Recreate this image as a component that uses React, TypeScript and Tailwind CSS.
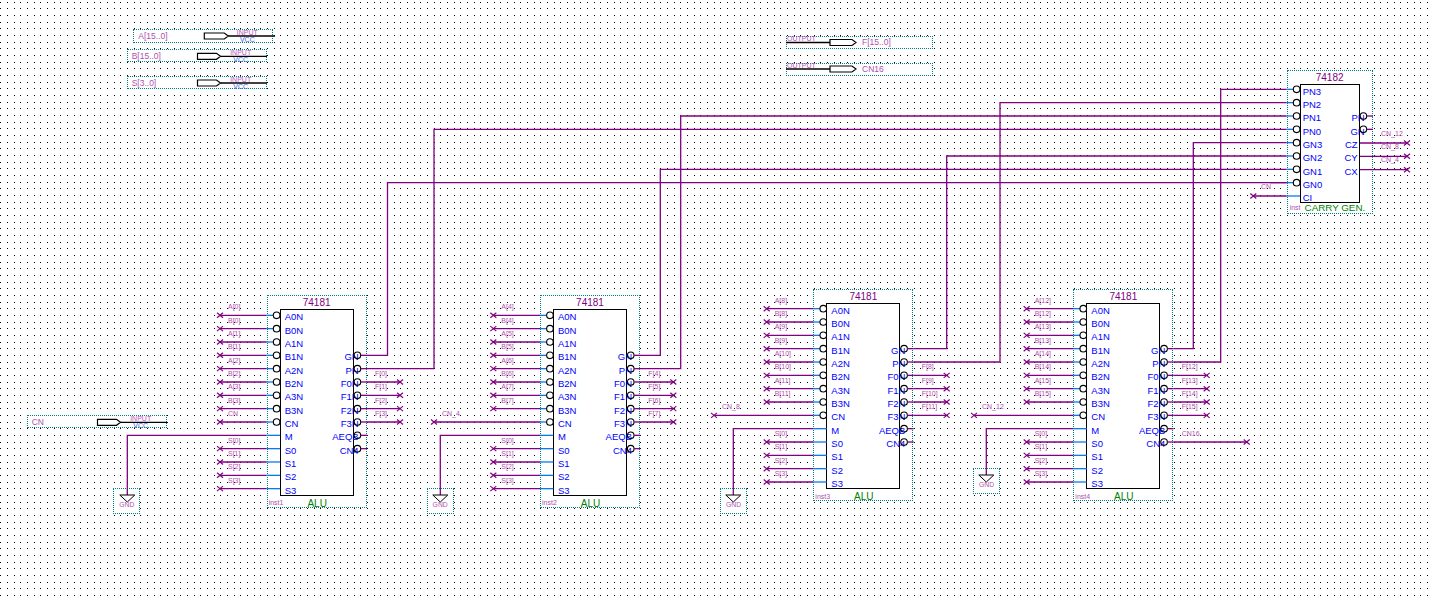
const ROW = 40 / 3;
const WIRE = '#800080';
const STUB = '#0a78f0';

// dot grid of the schematic editor
let dots = '';
for (let i = 0; i < 216; i++) {
  for (let j = 0; j < 90; j++) {
    const x = Math.floor(0.67 + i * (20 / 3));
    const y = Math.floor(2.3 + j * (20 / 3));
    dots += `M${x} ${y}h1v1h-1z`;
  }
}

interface AluChip {
  left: number;
  top: number;
  pos: string;
  inst: string;
  first: number;
  sel: number;
  gnd: [number, number];
  cn: { label: string; x: number } | null;
  g: { x: number; y: number };
  p: { x: number; y: number };
}

const gen = { left: 1300, top: 83.33, y0: 89.33 };
const genRow = (i: number) => gen.y0 + i * ROW;

const chips: AluChip[] = [
  { left: 280, top: 309.33, pos: 'left-[266.67px] top-[295.33px]', inst: 'inst1', first: 0, sel: 0, gnd: [127.3, 495], cn: null, g: { x: 387.5, y: genRow(7) }, p: { x: 434, y: genRow(3) } },
  { left: 553.33, top: 309.33, pos: 'left-[540px] top-[295.33px]', inst: 'inst2', first: 4, sel: 0, gnd: [440.3, 495], cn: { label: 'CN_4', x: 434 }, g: { x: 660.3, y: genRow(6) }, p: { x: 680.7, y: genRow(2) } },
  { left: 826.67, top: 302.67, pos: 'left-[813.33px] top-[288.67px]', inst: 'inst3', first: 8, sel: 0, gnd: [733.3, 495], cn: { label: 'CN_8', x: 714 }, g: { x: 946.7, y: genRow(5) }, p: { x: 1000, y: genRow(1) } },
  { left: 1086.67, top: 302.67, pos: 'left-[1073.33px] top-[288.67px]', inst: 'inst4', first: 12, sel: 0, gnd: [986.3, 475], cn: { label: 'CN_12', x: 974 }, g: { x: 1193.3, y: genRow(4) }, p: { x: 1220.7, y: genRow(0) } },
];

const aluLeft = ['A0N', 'B0N', 'A1N', 'B1N', 'A2N', 'B2N', 'A3N', 'B3N', 'CN', 'M', 'S0', 'S1', 'S2', 'S3'];
const aluRight = ['GN', 'PN', 'F0N', 'F1N', 'F2N', 'F3N', 'AEQB', 'CN4'];
const genLeft = ['PN3', 'PN2', 'PN1', 'PN0', 'GN3', 'GN2', 'GN1', 'GN0', 'CI'];

function Cross({ x, y }: { x: number; y: number }) {
  return <path d={`M${x - 3} ${y - 2.5}L${x + 3} ${y + 2.5}M${x - 3} ${y + 2.5}L${x + 3} ${y - 2.5}`} stroke={WIRE} strokeWidth="1.2" fill="none" />;
}

function Line({ d, color = WIRE }: { d: string; color?: string }) {
  return <path d={d} stroke={color} strokeWidth="1.3" fill="none" />;
}

function Bubble({ x, y }: { x: number; y: number }) {
  return <circle cx={x} cy={y} r="3.3" stroke="#000" strokeWidth="1.1" fill="none" />;
}

function Label({ x, y, text }: { x: number; y: number; text: string }) {
  return (
    <text x={x} y={y} dominantBaseline="middle" className="fill-[#b050b0] text-[7px]">
      {text}
    </text>
  );
}

function AluWires({ chip }: { chip: AluChip }) {
  const { left, top, first } = chip;
  const y0 = top + 6;
  const row = (i: number) => y0 + i * ROW;
  const edge = left - 13.33;
  const right = left + 87;
  const inLabels: string[] = [];
  for (let b = first; b < first + 4; b++) inLabels.push(`A[${b}]`, `B[${b}]`);

  return (
    <g>
      {/* data inputs and carry in */}
      {aluLeft.slice(0, 9).map((_, i) => {
        const from = i === 8 && chip.cn ? chip.cn.x : left - 60;
        return (
          <g key={i}>
            <Cross x={from} y={row(i)} />
            <Line d={`M${from} ${row(i)}H${edge}`} />
            <Line d={`M${edge} ${row(i)}H${left - 6.6}`} color={STUB} />
            <Bubble x={left - 3.4} y={row(i)} />
          </g>
        );
      })}
      {inLabels.map((t, i) => (
        <Label key={t} x={left - 52} y={row(i) - 8} text={t} />
      ))}
      {chip.cn ? <Label x={chip.cn.x + 8} y={row(8) - 8} text={chip.cn.label} /> : <Label x={left - 52} y={row(8) - 8} text="CN" />}

      {/* mode pin goes to ground */}
      <Line d={`M${chip.gnd[0]} ${chip.gnd[1]}V${row(9)}H${edge}`} />
      <Line d={`M${edge} ${row(9)}H${left}`} color={STUB} />
      <path d={`M${chip.gnd[0] - 7.5} ${chip.gnd[1]}h15l-7.5 7z`} stroke="#000" strokeWidth="1" fill="#fff" />

      {[0, 1, 2, 3].map((s) => (
        <g key={s}>
          <Cross x={left - 60} y={row(10 + s)} />
          <Line d={`M${left - 60} ${row(10 + s)}H${edge}`} />
          <Line d={`M${edge} ${row(10 + s)}H${left}`} color={STUB} />
          <Label x={left - 52} y={row(10 + s) - 8} text={`S[${s}]`} />
        </g>
      ))}

      {/* outputs */}
      {aluRight.map((_, i) => (
        <g key={i}>
          <Bubble x={left + 77.4} y={row(3 + i)} />
          <Line d={`M${left + 80.8} ${row(3 + i)}H${right}`} />
        </g>
      ))}
      <Line d={`M${right} ${row(3)}H${chip.g.x}V${chip.g.y}H${gen.left - 13.33}`} />
      <Line d={`M${right} ${row(4)}H${chip.p.x}V${chip.p.y}H${gen.left - 13.33}`} />
      {[0, 1, 2, 3].map((f) => (
        <g key={f}>
          <Line d={`M${right} ${row(5 + f)}H${left + 120}`} />
          <Cross x={left + 120} y={row(5 + f)} />
          <Label x={left + 95} y={row(5 + f) - 8} text={`F[${first + f}]`} />
        </g>
      ))}
      {first === 12 && (
        <g>
          <Line d={`M${right} ${row(10)}H${left + 160}`} />
          <Cross x={left + 160} y={row(10)} />
          <Label x={left + 95} y={row(10) - 8} text="CN16" />
        </g>
      )}
    </g>
  );
}

function GenWires() {
  const edge = gen.left - 13.33;
  return (
    <g>
      {genLeft.slice(0, 8).map((_, i) => (
        <g key={i}>
          <Line d={`M${edge} ${genRow(i)}H${gen.left - 6.6}`} color={STUB} />
          <Bubble x={gen.left - 3.4} y={genRow(i)} />
        </g>
      ))}
      <Line d={`M1253.3 ${genRow(8)}H${edge}`} />
      <Line d={`M${edge} ${genRow(8)}H${gen.left}`} color={STUB} />
      <Cross x={1253.3} y={genRow(8)} />
      <Label x={1261} y={genRow(8) - 9} text="CN" />
      <Line d={`M${edge} ${genRow(7)}H1270`} />

      <Bubble x={1363.4} y={116} />
      <Bubble x={1363.4} y={129.33} />
      <Line d="M1366.8 116H1373" />
      <Line d="M1366.8 129.33H1373" />
      {['CN_12', 'CN_8', 'CN_4'].map((t, i) => (
        <g key={t}>
          <Line d={`M1360 ${143 + i * ROW}H1407`} />
          <Cross x={1407} y={143 + i * ROW} />
          <Label x={1381} y={134 + i * 13} text={t} />
        </g>
      ))}
    </g>
  );
}

function PinShape({ x, y, w }: { x: number; y: number; w: number }) {
  return <path d={`M${x} ${y - 3}H${x + w - 4}L${x + w} ${y}L${x + w - 4} ${y + 3}H${x}z`} stroke="#000" strokeWidth="1.2" fill="#fff" />;
}

function Alu({ chip }: { chip: AluChip }) {
  return (
    <div className={`absolute ${chip.pos} w-[100px] h-[212.67px] bg-white border border-dotted border-[#008080]`}>
      <div className="h-[13px] leading-[13px] text-center text-[10px] text-[#800080]">74181</div>
      <div className="mx-auto w-[74px] h-[186.67px] bg-white border border-black flex justify-between text-[9.5px] text-[#0000ff]">
        <div className="flex flex-col pl-[4px]">
          {aluLeft.map((p) => (
            <div key={p} className="h-[13.33px] leading-[13.33px]">{p}</div>
          ))}
        </div>
        <div className="flex flex-col items-end pt-[40px] -mr-[6px]">
          {aluRight.map((p) => (
            <div key={p} className="h-[13.33px] leading-[13.33px]">{p}</div>
          ))}
        </div>
      </div>
      <div className="grid grid-cols-[1fr_auto_1fr] items-center h-[11px] pl-[1px]">
        <span className="text-[7px] text-[#b050b0]">{chip.inst}</span>
        <span className="text-[10px] text-[#008000]">ALU</span>
      </div>
    </div>
  );
}

function CarryGen() {
  const right = [
    { t: 'PN', c: '-mr-[6px]' },
    { t: 'GN', c: '-mr-[6px]' },
    { t: 'CZ', c: 'mr-[1px]' },
    { t: 'CY', c: 'mr-[1px]' },
    { t: 'CX', c: 'mr-[1px]' },
  ];
  return (
    <div className="absolute left-[1286.67px] top-[69.67px] w-[86px] h-[144.67px] bg-white border border-dotted border-[#008080]">
      <div className="h-[13px] leading-[13px] text-center text-[10px] text-[#800080]">74182</div>
      <div className="mx-auto w-[60px] h-[119px] bg-white border border-black flex justify-between text-[9.5px] text-[#0000ff]">
        <div className="flex flex-col pl-[2px]">
          {genLeft.map((p) => (
            <div key={p} className="h-[13.33px] leading-[13.33px]">{p}</div>
          ))}
        </div>
        <div className="flex flex-col items-end pt-[26.67px]">
          {right.map((p) => (
            <div key={p.t} className={`h-[13.33px] leading-[13.33px] ${p.c}`}>{p.t}</div>
          ))}
        </div>
      </div>
      <div className="flex items-center gap-[4px] h-[11px] pl-[2px]">
        <span className="text-[7px] text-[#b050b0]">inst</span>
        <span className="text-[9.8px] whitespace-nowrap text-[#008000]">CARRY GEN.</span>
      </div>
    </div>
  );
}

function InputPin({ pos, name }: { pos: string; name: string }) {
  return (
    <div className={`absolute ${pos} bg-white border border-dotted border-[#008080] flex items-center justify-between pl-[4px]`}>
      <span className="text-[8.5px] leading-[10px] text-[#b050b0]">{name}</span>
      <div className="w-[50px] text-center text-[7px] leading-[7px]">
        <div className="text-[#c050c0]">INPUT</div>
        <div className="text-[#4060e0]">VCC</div>
      </div>
    </div>
  );
}

function OutputPin({ pos, name }: { pos: string; name: string }) {
  return (
    <div className={`absolute ${pos} bg-white border border-dotted border-[#008080] flex items-start`}>
      <span className="w-[75px] -mt-[2px] text-[7px] leading-[8px] text-[#c050c0]">OUTPUT</span>
      <span className="text-[8.5px] leading-[10px] text-[#b050b0]">{name}</span>
    </div>
  );
}

function Gnd({ pos }: { pos: string }) {
  return (
    <div className={`absolute ${pos} w-[27px] h-[26px] bg-white border border-dotted border-[#008080] flex items-end justify-center pb-[4px]`}>
      <span className="text-[6.8px] leading-[8px] text-[#b050b0]">GND</span>
    </div>
  );
}

export default function App() {
  return (
    <div className="relative w-[1434px] h-[599px] bg-white overflow-hidden [font-family:'Liberation_Sans',Arial,sans-serif]">
      <svg className="absolute inset-0" width="1434" height="599">
        <path d={dots} fill="#000" shapeRendering="crispEdges" />
      </svg>

      <InputPin pos="left-[133.33px] top-[29.33px] w-[140px] h-[13.33px]" name="A[15..0]" />
      <InputPin pos="left-[126.67px] top-[49px] w-[140px] h-[13.33px]" name="B[15..0]" />
      <InputPin pos="left-[126.67px] top-[76px] w-[140px] h-[13.33px]" name="S[3..0]" />
      <InputPin pos="left-[26.67px] top-[415px] w-[140px] h-[13.33px]" name="CN" />
      <OutputPin pos="left-[786px] top-[36px] w-[147.33px] h-[13.33px]" name="F[15..0]" />
      <OutputPin pos="left-[786px] top-[62.67px] w-[147.33px] h-[13.33px]" name="CN16" />

      <Gnd pos="left-[113.33px] top-[488px]" />
      <Gnd pos="left-[426.67px] top-[488px]" />
      <Gnd pos="left-[720px] top-[488px]" />
      <Gnd pos="left-[973px] top-[468px]" />

      {chips.map((c) => (
        <Alu key={c.inst} chip={c} />
      ))}
      <CarryGen />

      <svg className="absolute inset-0 pointer-events-none" width="1434" height="599">
        {chips.map((c) => (
          <AluWires key={c.inst} chip={c} />
        ))}
        <GenWires />

        <PinShape x={204.3} y={36} w={24} />
        <PinShape x={197.5} y={56.3} w={23} />
        <PinShape x={197.5} y={83} w={23} />
        <PinShape x={97.5} y={422.3} w={23} />
        <Line d="M228.3 36H275" color="#000" />
        <Line d="M220.5 56.3H267" color="#000" />
        <Line d="M220.5 83H267" color="#000" />
        <Line d="M120.5 422.3H167" color="#000" />

        <Line d="M786 42.5H830" color="#000" />
        <Line d="M786 69H830" color="#000" />
        <PinShape x={830} y={42.5} w={26} />
        <PinShape x={830} y={69} w={26} />
      </svg>
    </div>
  );
}
